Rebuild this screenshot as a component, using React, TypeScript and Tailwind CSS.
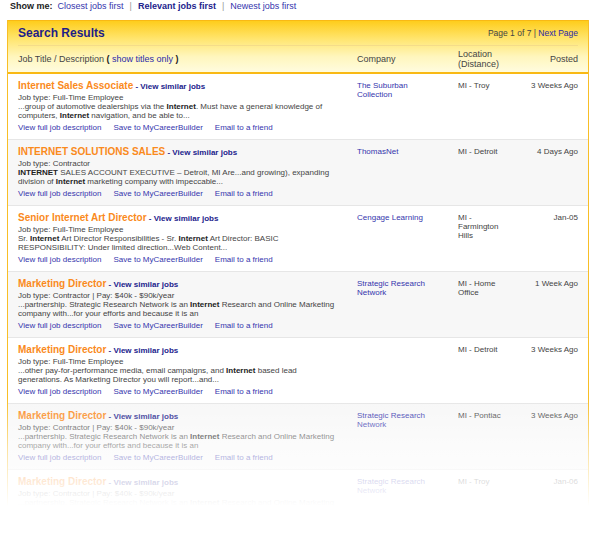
import React from 'react';

type Job = {
  title: string;
  type: string;
  body: React.ReactNode;
  company?: React.ReactNode;
  location: React.ReactNode;
  posted: string;
};

const B = ({ children }: { children: React.ReactNode }) => (
  <b className="font-bold text-[#222]">{children}</b>
);

const jobs: Job[] = [
  {
    title: 'Internet Sales Associate',
    type: 'Job type: Full-Time Employee',
    body: (
      <>
        ...group of automotive dealerships via the <B>Internet</B>. Must have a general knowledge of
        <br />
        computers, <B>Internet</B> navigation, and be able to...
      </>
    ),
    company: (
      <>
        The Suburban
        <br />
        Collection
      </>
    ),
    location: 'MI - Troy',
    posted: '3 Weeks Ago',
  },
  {
    title: 'INTERNET SOLUTIONS SALES',
    type: 'Job type: Contractor',
    body: (
      <>
        <B>INTERNET</B> SALES ACCOUNT EXECUTIVE – Detroit, MI Are...and growing), expanding
        <br />
        division of <B>Internet</B> marketing company with impeccable...
      </>
    ),
    company: 'ThomasNet',
    location: 'MI - Detroit',
    posted: '4 Days Ago',
  },
  {
    title: 'Senior Internet Art Director',
    type: 'Job type: Full-Time Employee',
    body: (
      <>
        Sr. <B>Internet</B> Art Director Responsibilities - Sr. <B>Internet</B> Art Director: BASIC
        <br />
        RESPONSIBILITY: Under limited direction...Web Content...
      </>
    ),
    company: 'Cengage Learning',
    location: (
      <>
        MI -
        <br />
        Farmington
        <br />
        Hills
      </>
    ),
    posted: 'Jan-05',
  },
  {
    title: 'Marketing Director',
    type: 'Job type: Contractor | Pay: $40k - $90k/year',
    body: (
      <>
        ...partnership. Strategic Research Network is an <B>Internet</B> Research and Online Marketing
        <br />
        company with...for your efforts and because it is an
      </>
    ),
    company: (
      <>
        Strategic Research
        <br />
        Network
      </>
    ),
    location: (
      <>
        MI - Home
        <br />
        Office
      </>
    ),
    posted: '1 Week Ago',
  },
  {
    title: 'Marketing Director',
    type: 'Job type: Full-Time Employee',
    body: (
      <>
        ...other pay-for-performance media, email campaigns, and <B>Internet</B> based lead
        <br />
        generations. As Marketing Director you will report...and...
      </>
    ),
    location: 'MI - Detroit',
    posted: '3 Weeks Ago',
  },
  {
    title: 'Marketing Director',
    type: 'Job type: Contractor | Pay: $40k - $90k/year',
    body: (
      <>
        ...partnership. Strategic Research Network is an <B>Internet</B> Research and Online Marketing
        <br />
        company with...for your efforts and because it is an
      </>
    ),
    company: (
      <>
        Strategic Research
        <br />
        Network
      </>
    ),
    location: 'MI - Pontiac',
    posted: '3 Weeks Ago',
  },
  {
    title: 'Marketing Director',
    type: 'Job type: Contractor | Pay: $40k - $90k/year',
    body: (
      <>
        ...partnership. Strategic Research Network is an <B>Internet</B> Research and Online Marketing
        <br />
        company with...for your efforts and because it is an
      </>
    ),
    company: (
      <>
        Strategic Research
        <br />
        Network
      </>
    ),
    location: 'MI - Troy',
    posted: 'Jan-06',
  },
];

const cols = 'grid grid-cols-[339px_101px_52px_1fr] px-[10px]';

const JobRow = ({ job, alt }: { job: Job; alt: boolean }) => (
  <div className={`${cols} h-[66px] border-b border-[#e6e6e6] pt-[6px] ${alt ? 'bg-[#f7f7f7]' : 'bg-white'}`}>
    <div className="text-[8px] leading-[9px]">
      <div className="text-[10px] leading-[12px] whitespace-nowrap">
        <span className="font-bold text-[#fa8a1c]">{job.title}</span>
        <span className="text-[8px] font-bold text-[#22228c]"> - View similar jobs</span>
      </div>
      <div className="text-[#444] whitespace-nowrap">{job.type}</div>
      <div className="text-[#444] whitespace-nowrap">{job.body}</div>
      <div className="mt-[3px] flex gap-[12px] text-[#3535ad] whitespace-nowrap">
        <span>View full job description</span>
        <span>Save to MyCareerBuilder</span>
        <span>Email to a friend</span>
      </div>
    </div>
    <div className="pt-[1px] text-[8px] leading-[9px] text-[#3535ad]">{job.company}</div>
    <div className="pt-[1px] text-[8px] leading-[9px] text-[#444]">{job.location}</div>
    <div className="pt-[1px] text-right text-[8px] leading-[9px] text-[#444]">{job.posted}</div>
  </div>
);

export default function App() {
  return (
    <div className="relative h-[536px] w-[600px] overflow-hidden bg-white font-['Liberation_Sans',Arial,sans-serif]">
      <div className="flex h-[14px] items-center pl-[10px] text-[9px] whitespace-nowrap">
        <span className="font-bold text-[#222]">Show me:</span>
        <span className="ml-[5px] text-[#3535ad]">Closest jobs first</span>
        <span className="mx-[6px] text-[#999]">|</span>
        <span className="font-bold text-[#22228c]">Relevant jobs first</span>
        <span className="mx-[6px] text-[#999]">|</span>
        <span className="text-[#3535ad]">Newest jobs first</span>
      </div>

      <div className="ml-[7px] mt-[6px] w-[582px] border-x border-[#f8be26]">
        <div className="border-t border-b-2 border-[#f9b914] bg-[linear-gradient(to_bottom,#fecd1c_0%,#ffe56e_35%,#fff6bd_70%,#fffcdf_100%)]">
          <div className="mx-[10px] flex h-[25px] items-center justify-between border-b border-[#f4dc8a]">
            <span className="text-[12px] font-bold text-[#1e1e88]">Search Results</span>
            <span className="text-[8.5px] text-[#444]">
              Page 1 of 7 | <span className="text-[#2a2aa8]">Next Page</span>
            </span>
          </div>
          <div className={`${cols} h-[26px] items-center text-[9px] leading-[10px] text-[#444]`}>
            <div className="whitespace-nowrap">
              Job Title / Description <b className="text-[#222]">(</b>{' '}
              <span className="text-[#2a2aa8]">show titles only</span> <b className="text-[#222]">)</b>
            </div>
            <div>Company</div>
            <div className="whitespace-nowrap">
              Location
              <br />
              (Distance)
            </div>
            <div className="text-right">Posted</div>
          </div>
        </div>

        {jobs.map((job, i) => (
          <JobRow key={i} job={job} alt={i % 2 === 1} />
        ))}
      </div>

      <div className="pointer-events-none absolute inset-x-0 top-[398px] bottom-0 bg-[linear-gradient(to_bottom,rgba(255,255,255,0)_0px,rgba(255,255,255,0.55)_50px,#fff_108px)]" />
    </div>
  );
}
